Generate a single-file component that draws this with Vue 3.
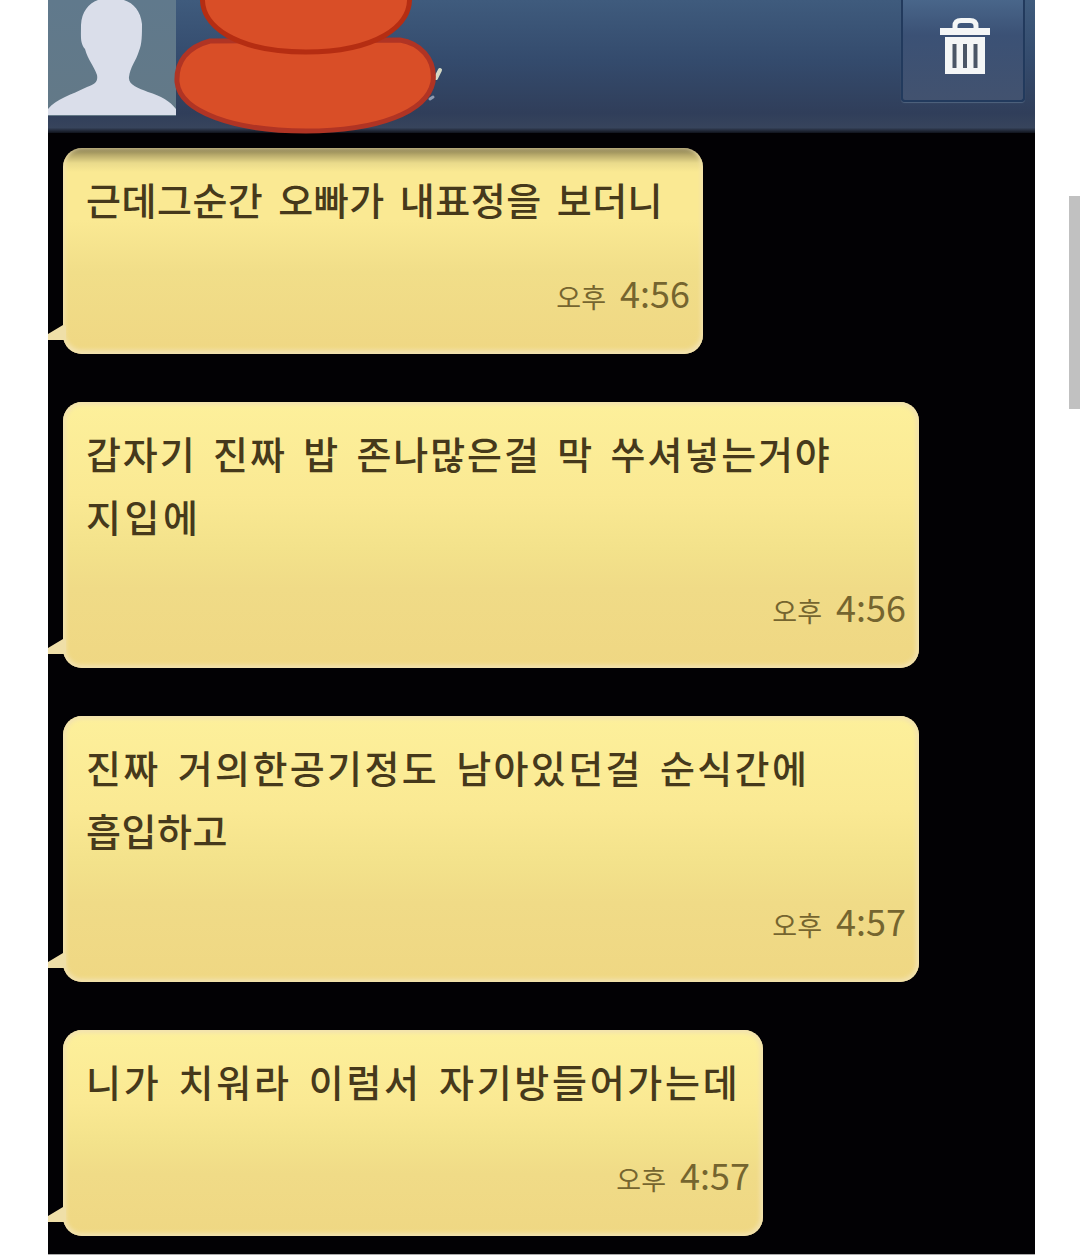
<script setup>
const messages = [
  {
    id: 1,
    lines: [{ text: '근데그순간 오빠가 내표정을 보더니', spacing: 0.5 }],
    time: '4:56',
    size: 'small',
    shaded: true
  },
  {
    id: 2,
    lines: [
      { text: '갑자기 진짜 밥 존나많은걸 막 쑤셔넣는거야', spacing: 1.9 },
      { text: '지입에', spacing: 3.6 }
    ],
    time: '4:56',
    size: 'large'
  },
  {
    id: 3,
    lines: [
      { text: '진짜 거의한공기정도 남아있던걸 순식간에', spacing: 2.4 },
      { text: '흡입하고', spacing: 0.5 }
    ],
    time: '4:57',
    size: 'large'
  },
  {
    id: 4,
    lines: [{ text: '니가 치워라 이럼서 자기방들어가는데', spacing: 2.7 }],
    time: '4:57',
    size: 'medium'
  }
]
</script>

<template>
  <div class="page">
    <main class="phone">
      <header class="top-bar">
        <svg class="avatar" viewBox="0 0 128 116">
          <defs>
            <linearGradient id="avatarBg" x1="0" y1="0" x2="0" y2="1">
              <stop offset="0" stop-color="#60798c" />
              <stop offset="1" stop-color="#637987" />
            </linearGradient>
          </defs>
          <rect width="128" height="116" fill="url(#avatarBg)" />
          <path
            d="M0 115V109C8 99 23 95 39 87C48 84 50 81 49 75C46 66 40 60 37 49C32 43 33 37 33 25C34 7 46-2 62-2C80-2 92 6 94 24C94 35 94 44 91 51C88 61 82 67 81 77C80 85 90 88 100 92C113 96 122 101 128 109V115Z"
            fill="#dadeea"
          />
        </svg>

        <!-- Scribble over the contact name -->
        <svg class="scribble" viewBox="0 0 280 140">
          <path d="M268 70L264 78" stroke="#d5d8c4" stroke-width="4" stroke-linecap="round" />
          <path d="M261 97L258 99" stroke="#8e9ab0" stroke-width="3" stroke-linecap="round" />
          <path
            d="M38 41C15 47 4 62 5 82C8 112 62 131 134 131C206 131 255 112 261 82C264 58 247 43 228 40Z"
            fill="#d94e27"
            stroke="#b03424"
            stroke-width="5"
          />
          <path
            d="M31-8C25 28 68 52 134 52C200 52 243 28 237-8Z"
            fill="#d94e27"
            stroke="#b52d12"
            stroke-width="5"
          />
        </svg>

        <button class="delete-btn" aria-label="삭제">
          <svg viewBox="0 0 52 58" width="52" height="58">
            <path d="M16 11V8Q16 2.500 22 2.500H31Q37 2.500 37 8V11" fill="none" stroke="#f4f6f6" stroke-width="5" />
            <path d="M1 10H51V17H1Z" fill="#f4f6f6" />
            <path d="M6 19H46V56H6Z" fill="#f4f6f6" />
            <path d="M15.500 26V50M26 26V50M36.500 26V50" stroke="#4b5666" stroke-width="4" />
          </svg>
        </button>
      </header>

      <section class="thread">
        <article
          v-for="message in messages"
          :key="message.id"
          :class="['bubble', message.size, { shaded: message.shaded }]"
        >
          <svg class="tail" viewBox="0 0 18 28">
            <path d="M0 13L15 4L18 5V22L16 19H0Z" fill="#efdfa8" />
          </svg>
          <p class="text">
            <span
              v-for="line in message.lines"
              :key="line.text"
              class="line"
              :style="{ letterSpacing: `${line.spacing}px` }"
            >{{ line.text }}</span>
          </p>
          <time class="time"><span class="meridiem">오후</span>{{ message.time }}</time>
        </article>
      </section>
    </main>
    <div class="scrollbar"></div>
  </div>
</template>

<style>
body {
  margin: 0;
  background: #fff;
}
</style>

<style scoped>
.page {
  display: flex;
  justify-content: space-between;
  height: 1258px;
  padding-left: 48px;
  box-sizing: border-box;
  overflow: hidden;
  background: #fff;
  font-family: 'Noto Sans CJK KR', 'Noto Sans', sans-serif;
}

.phone {
  width: 987px;
  height: 1254px;
  background: #020104;
  border-bottom: 1px solid #aaa;
}

.top-bar {
  position: relative;
  display: flex;
  justify-content: space-between;
  align-items: flex-start;
  height: 133px;
  padding-right: 10px;
  box-sizing: border-box;
  background: linear-gradient(180deg, #3f5b7d 0%, #344b6d 45%, #303e5a 85%, #37445c 96%, #10131c 100%);
}

.avatar {
  width: 128px;
  height: 116px;
}

.scribble {
  position: absolute;
  left: 124px;
  top: 0;
  width: 280px;
  height: 140px;
}

.delete-btn {
  display: flex;
  justify-content: center;
  width: 124px;
  height: 102px;
  padding: 18px 0 0 3px;
  border: 2px solid #223a5d;
  border-top: 0;
  border-radius: 0 0 4px 4px;
  background: linear-gradient(180deg, #49668a 0%, #3b5175 35%, #42526f 100%);
  box-shadow: 0 1px 1px #50647f;
}

.thread {
  display: flex;
  flex-direction: column;
  align-items: flex-start;
  gap: 48px;
  padding: 15px 0 0 15px;
}

.bubble {
  position: relative;
  display: flex;
  flex-direction: column;
  justify-content: space-between;
  box-sizing: border-box;
  height: 206px;
  padding: 19px 13px 28px 23px;
  border-radius: 19px;
  background: linear-gradient(180deg, #fdf09b 0%, #fae993 35%, #f3e28b 55%, #f0db87 70%, #efd783 100%);
  box-shadow: inset 0 0 4px 3px #f2e2b0;
}

.small {
  width: 640px;
}

.medium {
  width: 700px;
}

.large {
  width: 856px;
  height: 266px;
}

.shaded {
  background: linear-gradient(180deg, #827950 0, #b8aa6b 7px, #e9da8b 15px, #fae993 24px, #fae993 35%, #f1de89 60%, #efd783 100%);
  box-shadow: inset 0 -2px 4px 2px #f2e2b0;
}

.tail {
  position: absolute;
  left: -15px;
  bottom: 5px;
  width: 18px;
  height: 28px;
}

.text {
  margin: 0;
  color: #46391b;
  font-size: 38px;
  font-weight: 500;
  line-height: 63px;
  word-spacing: 6px;
}

.line {
  display: block;
  white-space: nowrap;
}

.time {
  align-self: flex-end;
  display: flex;
  align-items: baseline;
  gap: 14px;
  color: #75652f;
  font-size: 36px;
  font-weight: 400;
  line-height: 58px;
}

.meridiem {
  font-size: 27px;
}

.scrollbar {
  width: 11px;
  height: 213px;
  margin-top: 196px;
  background: #c1c1c1;
}
</style>
